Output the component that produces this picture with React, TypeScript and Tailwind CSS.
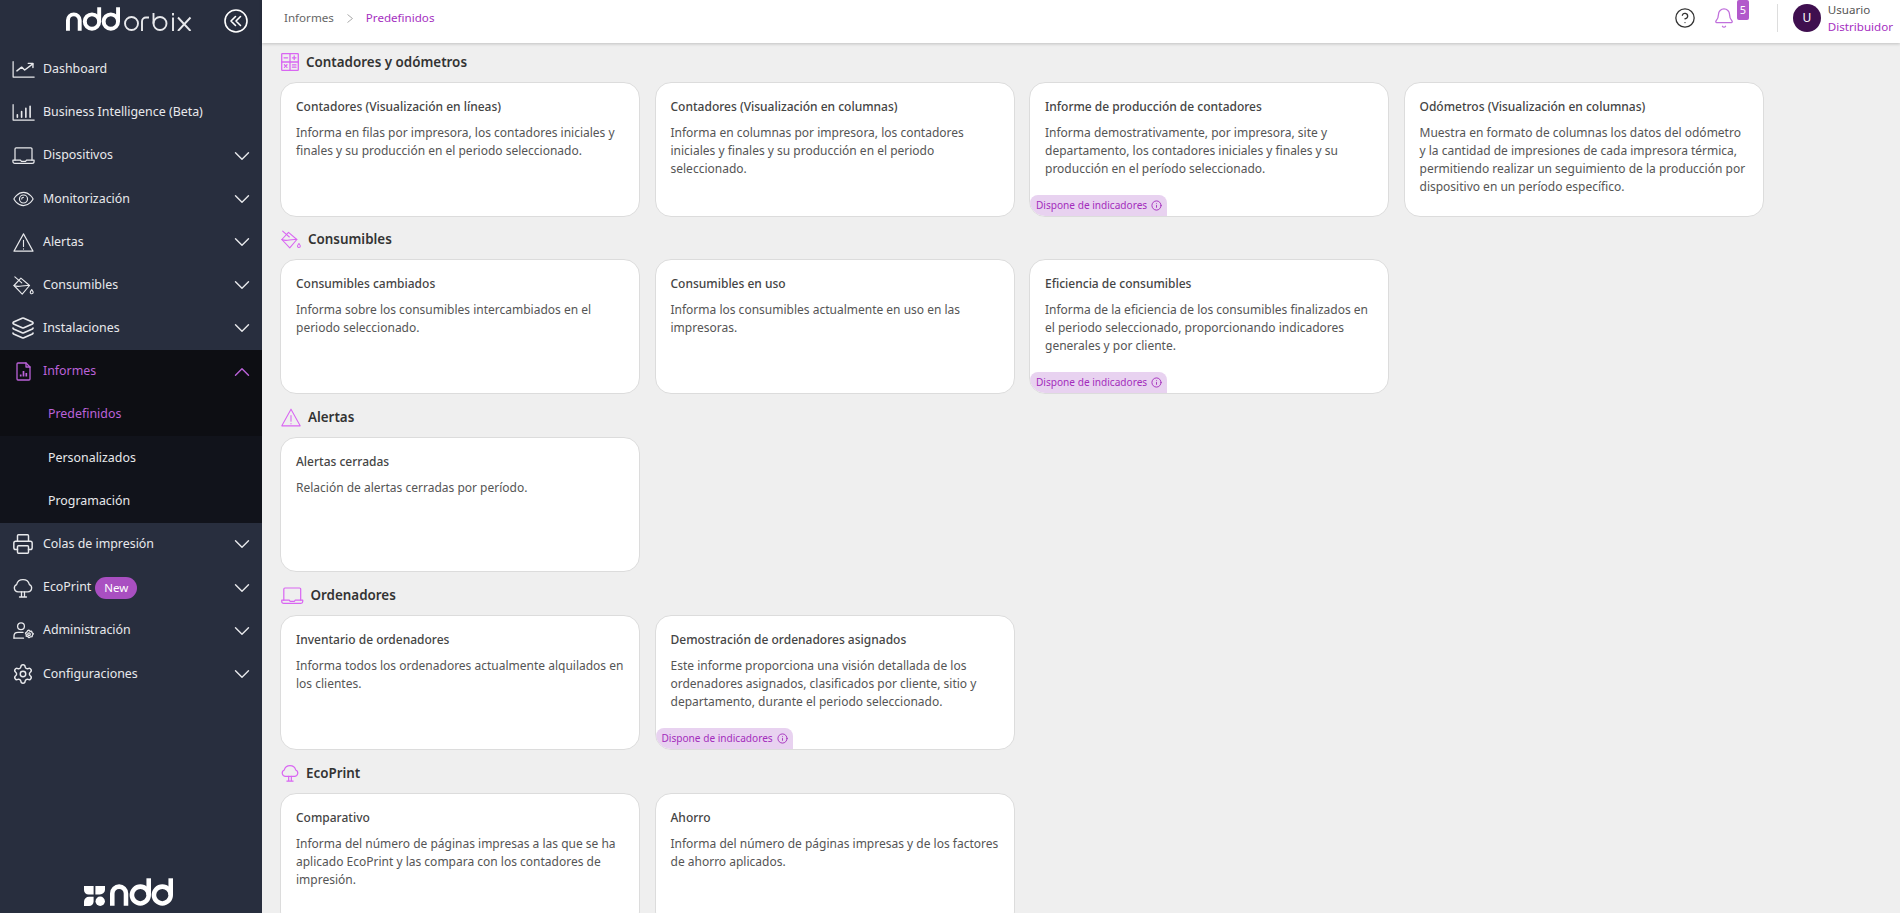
import React from "react";
import { ChevronDown, ChevronUp, CircleHelp, Bell, Info, Printer, Settings, Layers } from "lucide-react";

type IP = { className?: string };
const S = ({ vb, ...p }: any) => <svg viewBox={vb} fill="none" stroke="currentColor" strokeWidth={1.3} strokeLinecap="round" strokeLinejoin="round" {...p} />;

const Trend = (p: IP) => <S vb="0 0 24 18" {...p}><path d="M1 .7V17h22.3" /><path d="M5 10.5l5-4 3.3 3 8.5-6.5" strokeWidth={1.5} /><path d="M17 2.5h5v4.5" strokeWidth={1.5} /></S>;
const Bars = (p: IP) => <S vb="0 0 24 18" {...p}><path d="M1 .7V17h22.3" /><path d="M5.5 14v-2.5M10 14V8M14.5 14V4.5M19 14V2.5" strokeWidth={1.7} /></S>;
const LaptopI = (p: IP) => <S vb="0 0 24 18" {...p}><path d="M3 14V2.2A1.2 1.2 0 0 1 4.2 1h15.6A1.2 1.2 0 0 1 21 2.2V14" /><path d="M.8 14h8l1 1.2h4.4l1-1.2h8v1.3a2 2 0 0 1-2 2H2.8a2 2 0 0 1-2-2z" /></S>;
const EyeI = (p: IP) => <S vb="0 0 24 18" {...p}><path d="M1 9s4-7.5 11-7.5S23 9 23 9s-4 7.5-11 7.5S1 9 1 9z" /><circle cx="12" cy="9" r="4.6" /><path d="M10 9a2 2 0 0 1 2-2" /></S>;
const Warn = (p: IP) => <S vb="0 0 24 22" {...p}><path d="M12 1l11 20H1z" /><path d="M12 8.5v7M12 18.3v.3" /></S>;
const Bucket = (p: IP) => <S vb="0 0 24 22" {...p}><path d="M1 11L9 2.5l10 8.5-8.5 10z" /><path d="M1 11c3.5 1.6 6 1.2 9 .5s6-.4 9-.5" /><path d="M2 1l8 7" /><path d="M21.5 15.8c1 1.4 1.7 2.2 1.7 3.1a1.7 1.7 0 0 1-3.4 0c0-.9.7-1.7 1.7-3.1z" /></S>;
const ReportDoc = (p: IP) => <S vb="0 0 15 19" {...p}><path d="M2 1h8l4 4v12a1 1 0 0 1-1 1H2a1 1 0 0 1-1-1V2a1 1 0 0 1 1-1z" /><path d="M10 1v4h4" /><path d="M4.7 14.5v-2M7.5 14.5V9M10.3 14.5v-3.5" strokeWidth={1.7} strokeLinecap="butt" /></S>;
const Tree = (p: IP) => <S vb="0 0 20 20" {...p}><path d="M5 13.8a3.7 3.7 0 0 1-1.4-7.1 6.6 6.6 0 0 1 12.8 0 3.7 3.7 0 0 1-1.4 7.1z" /><path d="M8.5 13.8v5M11.5 13.8v5M6.5 19h7" /></S>;
const AdminI = (p: IP) => <S vb="0 0 21 17" {...p}><circle cx="8" cy="4.2" r="3.4" /><path d="M1 16v-2c0-2.2 1.8-3.6 4-3.6h5" /><path d="M1 16.2h9.5" /><circle cx="16" cy="12.2" r="1.3" /><path d="M16 8.2l1 1.1 1.6-.1.5 1.5 1.2 1.1-.9 1.3-.3 1.6-1.6.1-1.5.9-1.2-1.1-1.6-.4.1-1.6-.8-1.5 1.3-1 .8-1.4z" /></S>;
const Calc = (p: IP) => <S vb="0 0 18 18" {...p}><rect x=".7" y=".7" width="16.6" height="16.6" rx=".6" /><path d="M9 .7v16.6M.7 9h16.6M3 4.8h3.6M11.4 4.8H15M13.2 3v3.6M11.4 11.9H15M11.4 14.2H15M3.4 11.8l2.6 2.6M6 11.8l-2.6 2.6" /></S>;

const LogoNdd = ({ className }: IP) => (
  <svg viewBox="0 0 69 30" className={className} fill="none" stroke="currentColor" strokeWidth={5}>
    <path d="M2.5 30V16.6a7.5 7.5 0 0 1 15 0V30" />
    <circle cx="33.2" cy="18.3" r="9.2" />
    <path d="M42.4 18.3V0" />
    <circle cx="57.3" cy="18.3" r="9.2" />
    <path d="M66.5 18.3V0" />
  </svg>
);
const LogoOrbix = ({ className }: IP) => (
  <svg viewBox="0 0 68 18" className={className} fill="none" stroke="currentColor" strokeWidth={1.9}>
    <circle cx="7.5" cy="10.5" r="6.5" />
    <path d="M18 18V8.5a4 4 0 0 1 4-4h3" />
    <circle cx="36" cy="10.5" r="6.5" />
    <path d="M29.5 10.5V0" />
    <path d="M49 18V4.5M49 0v2.4" />
    <path d="M54 4.5L66.5 18M66.5 4.5L54 18" />
  </svg>
);
const LogoMark = () => (
  <svg viewBox="0 0 21 20" className="w-[21px] h-[20px] mr-[5px]" fill="#fff">
    <path d="M0 0h9.6v8.6H4.5A4.5 4.5 0 0 1 0 4.1z" />
    <path d="M11.4 0H21v3.5a5.1 5.1 0 0 1-5.1 5.1h-4.5z" />
    <path d="M0 20v-4.2a5 5 0 0 1 5-5h4.6v4.7a4.5 4.5 0 0 1-4.5 4.5z" />
    <circle cx="16.2" cy="15.3" r="4.7" />
  </svg>
);

type Row = { label: string; icon: React.ReactNode; chevron?: boolean; badge?: boolean };
const before: Row[] = [
  { label: "Dashboard", icon: <Trend className="w-[23px] h-[17px]" /> },
  { label: "Business Intelligence (Beta)", icon: <Bars className="w-[23px] h-[17px]" /> },
  { label: "Dispositivos", icon: <LaptopI className="w-[23px] h-[17px]" />, chevron: true },
  { label: "Monitorización", icon: <EyeI className="w-[21px] h-[16px]" />, chevron: true },
  { label: "Alertas", icon: <Warn className="w-[21px] h-[19px]" />, chevron: true },
  { label: "Consumibles", icon: <Bucket className="w-[21px] h-[19px]" />, chevron: true },
  { label: "Instalaciones", icon: <Layers className="w-[24px] h-[24px] stroke-[1.7]" />, chevron: true },
];
const after: Row[] = [
  { label: "Colas de impresión", icon: <Printer className="w-[22px] h-[22px] stroke-[1.6]" />, chevron: true },
  { label: "EcoPrint", icon: <Tree className="w-[20px] h-[20px]" />, chevron: true, badge: true },
  { label: "Administración", icon: <AdminI className="w-[21px] h-[17px]" />, chevron: true },
  { label: "Configuraciones", icon: <Settings className="w-[22px] h-[22px] stroke-[1.6]" />, chevron: true },
];

const NavRow = ({ r }: { r: Row }) => (
  <div className="h-[43.2px] flex items-center pl-[11px] pr-[7px] text-[12.4px] text-[#e8e9ec]">
    <span className="w-[24px] flex justify-center shrink-0">{r.icon}</span>
    <span className="ml-[8px]">{r.label}</span>
    {r.badge && <span className="ml-[4px] h-[22px] px-[9px] rounded-full bg-[#a94fc1] text-white text-[11.5px] flex items-center">New</span>}
    {r.chevron && <ChevronDown className="ml-auto w-[26px] h-[26px] stroke-[1.3]" />}
  </div>
);

type Card = { title: string; text: string; ind?: boolean };
const sections: { title: string; icon: React.ReactNode; cards: Card[] }[] = [
  { title: "Contadores y odómetros", icon: <Calc className="w-[18px] h-[18px]" />, cards: [
    { title: "Contadores (Visualización en líneas)", text: "Informa en filas por impresora, los contadores iniciales y finales y su producción en el periodo seleccionado." },
    { title: "Contadores (Visualización en columnas)", text: "Informa en columnas por impresora, los contadores iniciales y finales y su producción en el periodo seleccionado." },
    { title: "Informe de producción de contadores", text: "Informa demostrativamente, por impresora, site y departamento, los contadores iniciales y finales y su producción en el período seleccionado.", ind: true },
    { title: "Odómetros (Visualización en columnas)", text: "Muestra en formato de columnas los datos del odómetro y la cantidad de impresiones de cada impresora térmica, permitiendo realizar un seguimiento de la producción por dispositivo en un período específico." },
  ]},
  { title: "Consumibles", icon: <Bucket className="w-[20px] h-[19px]" />, cards: [
    { title: "Consumibles cambiados", text: "Informa sobre los consumibles intercambiados en el periodo seleccionado." },
    { title: "Consumibles en uso", text: "Informa los consumibles actualmente en uso en las impresoras." },
    { title: "Eficiencia de consumibles", text: "Informa de la eficiencia de los consumibles finalizados en el periodo seleccionado, proporcionando indicadores generales y por cliente.", ind: true },
  ]},
  { title: "Alertas", icon: <Warn className="w-[20px] h-[19px]" />, cards: [
    { title: "Alertas cerradas", text: "Relación de alertas cerradas por período." },
  ]},
  { title: "Ordenadores", icon: <LaptopI className="w-[22.5px] h-[17px]" />, cards: [
    { title: "Inventario de ordenadores", text: "Informa todos los ordenadores actualmente alquilados en los clientes." },
    { title: "Demostración de ordenadores asignados", text: "Este informe proporciona una visión detallada de los ordenadores asignados, clasificados por cliente, sitio y departamento, durante el periodo seleccionado.", ind: true },
  ]},
  { title: "EcoPrint", icon: <Tree className="w-[18px] h-[18px]" />, cards: [
    { title: "Comparativo", text: "Informa del número de páginas impresas a las que se ha aplicado EcoPrint y las compara con los contadores de impresión." },
    { title: "Ahorro", text: "Informa del número de páginas impresas y de los factores de ahorro aplicados." },
  ]},
];

export default function App() {
  return (
    <div className="h-[913px] w-[1900px] flex overflow-hidden bg-[#efefef] font-['Noto_Sans','Open_Sans',sans-serif]">
      <aside className="w-[262px] shrink-0 bg-[#282e3e] flex flex-col text-white">
        <div className="h-[47.7px] flex items-start shrink-0 pt-[7px]">
          <LogoNdd className="ml-[66px] w-[54px] h-[24px] text-white" />
          <LogoOrbix className="ml-[4px] mt-[6px] w-[68px] h-[18px] text-[#e8e9ec]" />
          <svg viewBox="0 0 24 24" className="ml-[32px] mt-[2px] w-[24px] h-[24px]" fill="none" stroke="#fff" strokeWidth="1.6" strokeLinecap="round" strokeLinejoin="round"><circle cx="12" cy="12" r="11" /><path d="M11.5 7.5l-4.5 4.5 4.5 4.5M16.5 7.5l-4.5 4.5 4.5 4.5" /></svg>
        </div>
        {before.map((r) => <NavRow key={r.label} r={r} />)}
        <div className="bg-[#11131b]">
          <div className="bg-[#0d0e13]">
            <div className="h-[43.2px] flex items-center pl-[11px] pr-[7px] text-[12.4px] text-[#bb62d9]">
              <span className="w-[24px] flex justify-center shrink-0"><ReportDoc className="w-[15px] h-[19px]" /></span>
              <span className="ml-[8px]">Informes</span>
              <ChevronUp className="ml-auto w-[26px] h-[26px] stroke-[1.3]" />
            </div>
            <div className="h-[43.2px] flex items-center pl-[48px] text-[12.4px] text-[#bb62d9]">Predefinidos</div>
          </div>
          <div className="h-[43.2px] flex items-center pl-[48px] text-[12.4px] text-[#e8e9ec]">Personalizados</div>
          <div className="h-[43.2px] flex items-center pl-[48px] text-[12.4px] text-[#e8e9ec]">Programación</div>
        </div>
        {after.map((r) => <NavRow key={r.label} r={r} />)}
        <div className="mt-auto flex justify-center items-end pb-[7px] pr-[5px]">
          <LogoMark />
          <LogoNdd className="w-[63px] h-[28px] text-white" />
        </div>
      </aside>
      <main className="flex-1 min-w-0 flex flex-col">
        <header className="h-[43px] shrink-0 bg-white flex items-center shadow-[0_1px_3px_rgba(0,0,0,0.2)] pl-[22px] pb-[7px] text-[11.6px] relative z-10">
          <span className="text-[#666]">Informes</span>
          <svg viewBox="0 0 6 9" className="w-[6px] h-[9px] ml-[13px] mr-[13px] text-[#aaa]" fill="none" stroke="currentColor" strokeWidth="1"><path d="M.5.5l5 4-5 4" /></svg>
          <span className="text-[#a52fbf]">Predefinidos</span>
          <div className="ml-auto flex items-center">
            <CircleHelp className="w-[22px] h-[22px] text-[#333] stroke-[1.4]" />
            <div className="relative ml-[17.5px]">
              <Bell className="w-[22px] h-[22px] text-[#c070dc] stroke-[1.4]" />
              <span className="absolute -top-[7px] left-[23.5px] w-[12px] h-[20px] rounded-[2px] bg-[#b259cb] text-white text-[11px] flex items-center justify-center">5</span>
            </div>
            <div className="w-px h-[28px] bg-[#ddd] ml-[41.5px]" />
            <div className="ml-[15px] w-[28px] h-[28px] rounded-full bg-[#3f0f4f] text-white text-[12px] flex items-center justify-center">U</div>
            <div className="ml-[7px] mr-[7px] flex flex-col leading-[17px] text-[11.6px]">
              <span className="text-[#555]">Usuario</span>
              <span className="text-[#a52fbf]">Distribuidor</span>
            </div>
          </div>
        </header>
        <div className="pl-[18px] pt-[1px] flex flex-col">
          {sections.map((s) => (
            <section key={s.title} className="h-[178px] shrink-0 first:h-[177px]">
              <div className="h-[38px] flex items-center pb-[2px] pl-[1px]">
                <span className="text-[#d966f2] flex">{s.icon}</span>
                <h2 className="ml-[7px] text-[13.4px] font-semibold text-[#333]">{s.title}</h2>
              </div>
              <div className="flex gap-[14.5px]">
                {s.cards.map((c) => (
                  <article key={c.title} className="relative w-[360px] h-[135px] shrink-0 bg-white border border-[#dcdcdc] rounded-[16px] pt-[15px] px-[15px] overflow-hidden">
                    <h3 className="text-[12px] font-medium text-[#444] leading-[18px]">{c.title}</h3>
                    <p className="mt-[7.5px] text-[12px] text-[#555] leading-[18px]">{c.text}</p>
                    {c.ind && (
                      <div className="absolute left-0 bottom-0 h-[21px] pl-[6px] pr-[5px] bg-[#e8d2f0] rounded-t-[8px] flex items-center gap-[4px] text-[10.1px] text-[#a32cbc]">
                        Dispone de indicadores <Info className="w-[11px] h-[11px]" />
                      </div>
                    )}
                  </article>
                ))}
              </div>
            </section>
          ))}
        </div>
      </main>
    </div>
  );
}
